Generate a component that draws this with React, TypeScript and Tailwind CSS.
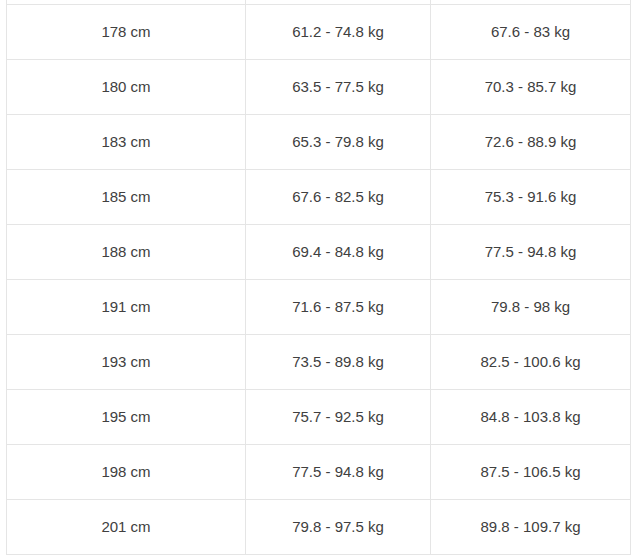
const rows = [
  ["178 cm", "61.2 - 74.8 kg", "67.6 - 83 kg"],
  ["180 cm", "63.5 - 77.5 kg", "70.3 - 85.7 kg"],
  ["183 cm", "65.3 - 79.8 kg", "72.6 - 88.9 kg"],
  ["185 cm", "67.6 - 82.5 kg", "75.3 - 91.6 kg"],
  ["188 cm", "69.4 - 84.8 kg", "77.5 - 94.8 kg"],
  ["191 cm", "71.6 - 87.5 kg", "79.8 - 98 kg"],
  ["193 cm", "73.5 - 89.8 kg", "82.5 - 100.6 kg"],
  ["195 cm", "75.7 - 92.5 kg", "84.8 - 103.8 kg"],
  ["198 cm", "77.5 - 94.8 kg", "87.5 - 106.5 kg"],
  ["201 cm", "79.8 - 97.5 kg", "89.8 - 109.7 kg"],
];

export default function App() {
  return (
    <div className="bg-white w-[637px] h-[558px] pl-[6px] font-['Liberation_Sans',Arial,sans-serif] text-[15px] text-[#404040]">
      <div className="grid grid-cols-[239px_185px_200px] w-fit border-l border-[#e5e5e5]">
        {/* tail of the row above, scrolled out of view */}
        <div className="h-[5px] border-r border-b border-[#e5e5e5]" />
        <div className="h-[5px] border-r border-b border-[#e5e5e5]" />
        <div className="h-[5px] border-r border-b border-[#e5e5e5]" />
        {rows.map((row) =>
          row.map((cell, i) => (
            <div
              key={row[0] + i}
              className="h-[55px] flex items-center justify-center border-r border-b border-[#e5e5e5]"
            >
              {cell}
            </div>
          ))
        )}
      </div>
    </div>
  );
}
